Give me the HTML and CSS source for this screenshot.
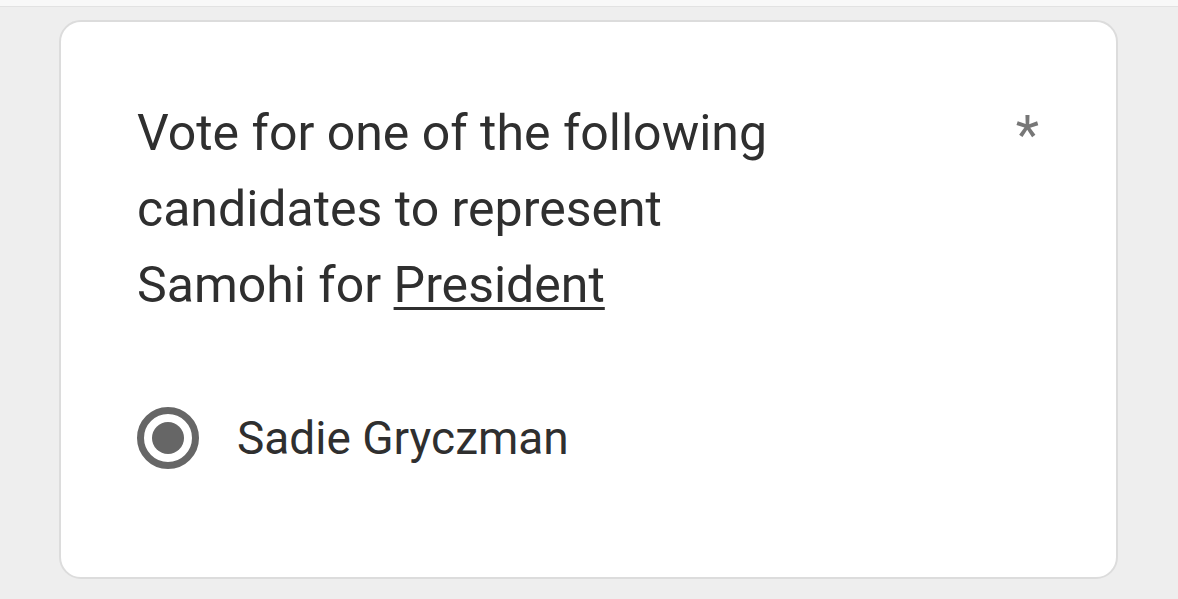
FILE: index.html
```html
<!DOCTYPE html>
<html>
<head>
<meta charset="utf-8">
<link rel="stylesheet" href="styles.css">
</head>
<body>
<div class="topbar"></div>
<main class="page">
  <section class="card">
    <div class="question">
      <h2 class="title">Vote for one of the following candidates to represent Samohi for <span class="u">President</span></h2>
      <span class="required">*</span>
    </div>
    <label class="option">
      <span class="radio"><span class="dot"></span></span>
      <span class="option-label">Sadie Gryczman</span>
    </label>
  </section>
</main>
</body>
</html>
```

FILE: styles.css
```css
html, body {
  margin: 0;
  padding: 0;
}
body {
  background: #eeeeee;
  font-family: Roboto, "Noto Sans", sans-serif;
  color: #333333;
  width: 1178px;
  height: 599px;
  overflow: hidden;
}
.topbar {
  height: 6px;
  background: #f8f8f8;
  border-bottom: 1px solid #e2e2e2;
}
.page {
  padding: 13px 0 0 59px;
}
.card {
  width: 1059px;
  height: 559px;
  box-sizing: border-box;
  background: #ffffff;
  border: 2px solid #dcdcdc;
  border-radius: 22px;
  padding: 73px 77px 0 76px;
}
.question {
  display: flex;
  justify-content: space-between;
  align-items: flex-start;
}
.title {
  margin: 0;
  font-weight: 400;
  font-size: 50px;
  line-height: 76px;
  max-width: 680px;
  color: #2f2f2f;
}
.u {
  text-decoration: underline;
  text-decoration-thickness: 3px;
  text-underline-offset: 5px;
}
.required {
  font-size: 54px;
  line-height: 76px;
  color: #777777;
  margin-top: 2px;
}
.option {
  display: flex;
  align-items: center;
  margin-top: 84px;
  gap: 38px;
}
.radio {
  width: 62px;
  height: 62px;
  box-sizing: border-box;
  border: 7px solid #666666;
  border-radius: 50%;
  display: flex;
  align-items: center;
  justify-content: center;
}
.dot {
  width: 32px;
  height: 32px;
  border-radius: 50%;
  background: #666666;
}
.option-label {
  font-size: 46px;
  line-height: 62px;
  color: #2f2f2f;
}
```
